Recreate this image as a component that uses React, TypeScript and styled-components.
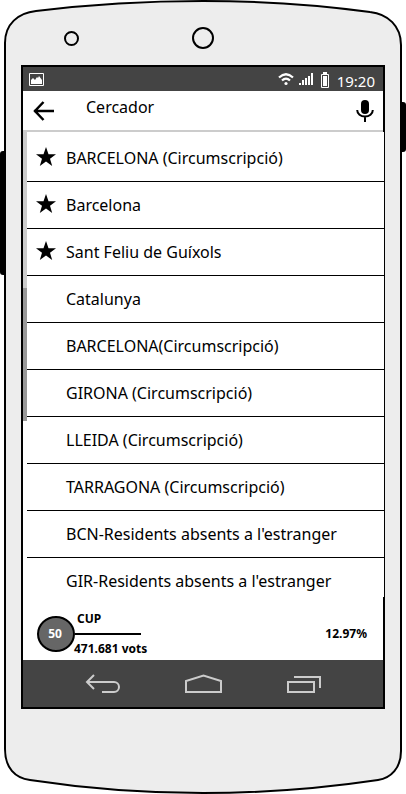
import React from "react";
import styled, { createGlobalStyle } from "styled-components";

const GlobalStyle = createGlobalStyle`
  * { box-sizing: border-box; }
  body { margin: 0; background: #fff; }
  button { border: 0; padding: 0; background: none; color: inherit; font: inherit; cursor: pointer; }
  svg { display: block; }
`;

const Phone = styled.div`
  position: relative;
  display: flex;
  flex-direction: column;
  min-height: 100vh;
  padding: 65px 21px 85px;
  font-family: "Noto Sans", "Open Sans", sans-serif;
  color: #000;
`;

const Shell = styled.svg`
  position: absolute;
  inset: 0;
  width: 100%;
  height: 100%;
`;

const Screen = styled.div`
  position: relative;
  flex: 1;
  display: flex;
  flex-direction: column;
  border: 2px solid #000;
  background: #fff;
`;

const StatusBar = styled.div`
  display: flex;
  align-items: center;
  height: 24px;
  padding: 0 8px 0 6px;
  background: #444;
  color: #fff;
`;

const StatusIcons = styled.div`
  display: flex;
  align-items: center;
  gap: 5px;
  margin-left: auto;
`;

const Clock = styled.time`
  margin-left: 5px;
  padding-top: 4px;
  font-size: 15px;
  line-height: 20px;
`;

const SearchBar = styled.form`
  display: flex;
  align-items: center;
  height: 41px;
  padding: 0 9px 0 8px;
  border-bottom: 2px solid #ccc;
`;

const SearchInput = styled.input`
  flex: 1;
  min-width: 0;
  margin: 0 12px 8px 31px;
  padding: 0;
  border: 0;
  outline: 0;
  background: none;
  color: #000;
  font: 16px/22px "Noto Sans", "Open Sans", sans-serif;
`;

const Content = styled.main`
  flex: 1;
  display: flex;
  margin-right: -1px;
  background: #fff;
`;

const ScrollTrack = styled.div`
  width: 4px;
  height: 289px;
  padding-top: 156px;
  background: #ccc;
`;

const ScrollThumb = styled.div`
  height: 133px;
  background: #999;
`;

const PlaceList = styled.ul`
  flex: 1;
  margin: 0;
  padding: 3px 0 0;
  list-style: none;
`;

const PlaceItem = styled.li`
  display: flex;
  align-items: center;
  height: 47px;
  padding: 0 8px;
  border-bottom: 1px solid #000;

  &:last-child {
    height: 39px;
    padding-bottom: 0;
    border-bottom: 0;
    align-items: flex-start;
    padding-top: 12px;
  }
`;

const StarSlot = styled.span`
  width: 31px;
  height: 24px;
`;

const PlaceButton = styled.button`
  flex: 1;
  text-align: left;
  font-size: 16px;
  line-height: 22px;
  white-space: nowrap;
`;

const Result = styled.section`
  display: flex;
  align-items: center;
  height: 63px;
  padding: 10px 16px 0 14px;
  font-size: 12px;
  font-weight: 700;
  line-height: 16px;
`;

const Seats = styled.span`
  display: grid;
  place-items: center;
  width: 38px;
  height: 36px;
  padding-right: 2px;
  border: 2px solid #000;
  border-radius: 50%;
  background: #666;
  color: #fff;
`;

const Party = styled.div`
  width: 66px;
  white-space: nowrap;
`;

const PartyName = styled.div`
  padding: 0 0 6px 2px;
  border-bottom: 2px solid #000;
`;

const Votes = styled.div`
  padding-top: 6px;
  margin-left: -1px;
`;

const Percent = styled.span`
  margin-left: auto;
`;

const NavBar = styled.nav`
  display: flex;
  align-items: center;
  justify-content: space-around;
  height: 47px;
  padding: 0 29px;
  background: #444;
  color: #ccc;
`;

const places = [
  { name: "BARCELONA (Circumscripció)", starred: true },
  { name: "Barcelona", starred: true },
  { name: "Sant Feliu de Guíxols", starred: true },
  { name: "Catalunya", starred: false },
  { name: "BARCELONA(Circumscripció)", starred: false },
  { name: "GIRONA (Circumscripció)", starred: false },
  { name: "LLEIDA (Circumscripció)", starred: false },
  { name: "TARRAGONA (Circumscripció)", starred: false },
  { name: "BCN-Residents absents a l'estranger", starred: false },
  { name: "GIR-Residents absents a l'estranger", starred: false },
];

function Star() {
  return (
    <svg width="22" height="22" viewBox="0 0 22 22" role="img" aria-label="Preferit">
      <path d="M11 1l2.500 7.200H21l-6 4.600 2.200 7.200-6.200-4.400L4.800 20 7 12.800 1 8.200h7.500z" />
    </svg>
  );
}

export default function App() {
  return (
    <>
      <GlobalStyle />
      <Phone>
        <Shell viewBox="0 0 406 794" preserveAspectRatio="none" aria-hidden="true">
          <rect x="0" y="151" width="9" height="124" rx="3" />
          <rect x="397" y="102" width="9" height="50" rx="3" />
          <path
            d="M5 43C5 24 18 13 36 11Q118 1 203 1T370 12C388 14 401 26 401 45V751C401 768 391 778 378 780Q291 793 203 793T30 780C15 778 5 768 5 749Z"
            fill="#ededed"
            stroke="#000"
            strokeWidth="2"
          />
          <circle cx="71.500" cy="38.500" r="6.500" fill="none" stroke="#000" strokeWidth="2" />
          <circle cx="203" cy="38" r="10" fill="none" stroke="#000" strokeWidth="2" />
        </Shell>
        <Screen>
          <StatusBar>
            <svg width="15" height="13" viewBox="0 0 15 13" aria-hidden="true">
              <path d="M.5.5h14v12H.5z" fill="none" stroke="#fff" />
              <path d="M2 11V7l2-2 2 2 2-3 1 1 1-2 3 4v4z" fill="#fff" />
            </svg>
            <StatusIcons>
              <svg width="16" height="14" viewBox="0 0 16 14" aria-hidden="true">
                <path d="M1 5.500Q8-1 15 5.500M4 8.500q4-4 8 0" fill="none" stroke="#fff" strokeWidth="2.200" />
                <circle cx="8" cy="11.500" r="1.600" fill="#fff" />
              </svg>
              <svg width="14" height="14" viewBox="0 0 14 14" aria-hidden="true">
                <path d="M0 11h2v2H0zM3 8h2v5H3zM6 6h2v7H6zM9 4h2v9H9zM12 1h2v12h-2z" fill="#fff" />
              </svg>
              <svg width="14" height="17" viewBox="0 0 14 17" aria-hidden="true">
                <path d="M3.500 3.500h7v13h-7zM5 1.500h4" fill="none" stroke="#fff" />
                <path d="M5 1h4v2H5zM5 5h4v10H5z" fill="#fff" />
              </svg>
            </StatusIcons>
            <Clock>19:20</Clock>
          </StatusBar>
          <SearchBar onSubmit={(e) => e.preventDefault()}>
            <button type="button" aria-label="Enrere">
              <svg width="24" height="24" viewBox="0 0 24 24" fill="none" stroke="#000">
                <path d="M12.500 3L4 12l8.500 9M3 12h20" strokeWidth="2.500" />
              </svg>
            </button>
            <SearchInput type="text" aria-label="Cercador" defaultValue="Cercador" />
            <button type="button" aria-label="Cerca per veu">
              <svg width="18" height="23" viewBox="0 0 18 23">
                <rect x="5" y="1" width="8" height="14" rx="4" />
                <path d="M1.200 11c0 4 3.500 6.500 7.800 6.500s7.800-2.500 7.800-6.500M9 17v6" fill="none" stroke="#000" strokeWidth="2" />
              </svg>
            </button>
          </SearchBar>
          <Content>
            <ScrollTrack>
              <ScrollThumb />
            </ScrollTrack>
            <PlaceList>
              {places.map((p) => (
                <PlaceItem key={p.name}>
                  <StarSlot>{p.starred && <Star />}</StarSlot>
                  <PlaceButton type="button">{p.name}</PlaceButton>
                </PlaceItem>
              ))}
            </PlaceList>
          </Content>
          <Result>
            <Seats>50</Seats>
            <Party>
              <PartyName>CUP</PartyName>
              <Votes>471.681 vots</Votes>
            </Party>
            <Percent>12.97%</Percent>
          </Result>
          <NavBar>
            <button type="button" aria-label="Enrere">
              <svg width="36" height="20" viewBox="0 0 36 20" fill="none" stroke="currentColor" strokeWidth="2">
                <path d="M10 1L3 8l7 7M3 8h27a5 5 0 0 1 0 10H18" />
              </svg>
            </button>
            <button type="button" aria-label="Inici">
              <svg width="38" height="20" viewBox="0 0 38 20" fill="none" stroke="currentColor" strokeWidth="2">
                <path d="M2 18V7L19.500 1.500 37 7v11z" />
              </svg>
            </button>
            <button type="button" aria-label="Aplicacions recents">
              <svg width="36" height="20" viewBox="0 0 36 20" fill="none" stroke="currentColor" strokeWidth="2">
                <path d="M2 8h26v10H2zM8 3h26v11" />
              </svg>
            </button>
          </NavBar>
        </Screen>
      </Phone>
    </>
  );
}
